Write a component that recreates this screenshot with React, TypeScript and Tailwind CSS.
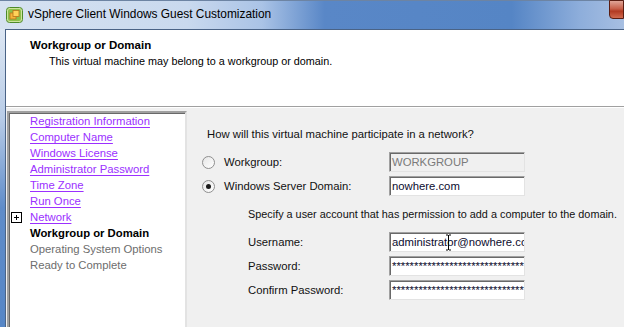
import React from "react";

const ui = { fontFamily: '"Liberation Sans", Arial, sans-serif' };

function Field({ value, disabled, cursor }: { value: string; disabled?: boolean; cursor?: boolean }) {
  return (
    <div
      className={`relative w-[136px] h-[20px] border border-[#a0a0a0] border-b-[#e3e3e3] border-r-[#e3e3e3] shadow-[inset_1px_1px_0_#696969] overflow-hidden whitespace-nowrap pl-[2px] flex items-center text-[11.3px] ${
        disabled ? "bg-[#f0f0f0] text-[#7a7a7a]" : "bg-white text-[#0b0b2e]"
      }`}
    >
      <span>{value}</span>
      {cursor && (
        <svg className="absolute left-[55px] top-[1px]" width="7" height="17" viewBox="0 0 7 17">
          <path d="M1 1h2M4 1h2M3.5 1v15M1 16h2M4 16h2" stroke="#000" strokeWidth="1" fill="none" />
        </svg>
      )}
    </div>
  );
}

function Radio({ checked }: { checked?: boolean }) {
  return (
    <div className="w-[13px] h-[13px] rounded-full border border-[#8f8f8f] bg-gradient-to-br from-[#e6e6e6] to-white flex items-center justify-center">
      {checked && <div className="w-[5px] h-[5px] rounded-full bg-[#1a1a1a]" />}
    </div>
  );
}

export default function App() {
  const links = [
    "Registration Information",
    "Computer Name",
    "Windows License",
    "Administrator Password",
    "Time Zone",
    "Run Once",
  ];
  return (
    <div className="w-[624px] h-[327px] overflow-hidden flex flex-col bg-[#f0f0f0]" style={ui}>
      {/* Title bar */}
      <div className="h-[29px] shrink-0 flex bg-[linear-gradient(90deg,#d6e2f1_0%,#c9d9ee_30%,#aac3e6_42%,#5987c7_52%,#5585c5_82%,#8eaedb_93%,#a7bfe2_100%)] border-t border-[#6d84a3]">
        <div className="flex items-center pl-[6px] gap-[5px]">
          <svg width="17" height="16" viewBox="0 0 17 16">
            <rect x="0.5" y="0.5" width="16" height="15" rx="3" fill="#cde39a" stroke="#4d8a2a" />
            <rect x="2" y="2" width="13" height="12" rx="2" fill="#8cc04a" />
            <rect x="4" y="6" width="6" height="6" fill="#f4b63a" stroke="#b9731a" strokeWidth="0.8" />
            <rect x="7" y="3.5" width="6" height="6" fill="#ffd35a" stroke="#b9731a" strokeWidth="0.8" />
          </svg>
          <span className="text-[11.9px] text-black">vSphere Client Windows Guest Customization</span>
        </div>
        <div className="ml-auto self-start w-[15px] h-[19px] -mt-px rounded-bl-[4px] border border-[#5a1d12] bg-[linear-gradient(180deg,#e0a597_0%,#c7604a_45%,#b23a22_60%,#d06a4e_100%)]" />
      </div>

      <div className="flex flex-1 min-h-0">
        {/* left frame */}
        <div className="w-[5px] shrink-0 bg-[linear-gradient(180deg,#dde7f3_0%,#b8cce7_30%,#5f8cc9_60%,#5686c6_100%)]" />
        <div className="flex-1 flex flex-col border-l border-t border-[#4a6386] min-w-0">
          {/* header */}
          <div className="h-[76px] shrink-0 bg-white pl-[24px] pt-[7px] text-black">
            <div className="h-[16px] leading-[16px] text-[11.5px] font-bold">Workgroup or Domain</div>
            <div className="h-[16px] leading-[16px] text-[10.8px] pl-[19px] whitespace-nowrap">
              This virtual machine may belong to a workgroup or domain.
            </div>
          </div>
          <div className="h-[2px] shrink-0 border-t border-[#a0a0a0] bg-white" />

          {/* body */}
          <div className="flex flex-1 min-h-0 pt-[3px] text-[11.3px] text-[#111] whitespace-nowrap">
            {/* sidebar */}
            <div className="w-[180px] ml-px shrink-0 bg-white border-2 border-b-0 border-[#a0a0a0] border-r-[#e3e3e3] shadow-[inset_1px_1px_0_#696969] pl-[2px]">
              {links.map((l) => (
                <div key={l} className="flex h-[16px] leading-[16px] items-center">
                  <div className="w-[19px]" />
                  <span className="text-[#9b30ff] underline underline-offset-[2px]">{l}</span>
                </div>
              ))}
              <div className="flex h-[16px] leading-[16px] items-center">
                <div className="w-[19px] flex items-center">
                  <svg width="11" height="11" viewBox="0 0 11 11">
                    <rect x="0.5" y="0.5" width="10" height="10" fill="white" stroke="#000" />
                    <path d="M3 5.5h5M5.5 3v5" stroke="#000" />
                  </svg>
                </div>
                <span className="text-[#9b30ff] underline underline-offset-[2px]">Network</span>
              </div>
              <div className="flex h-[16px] leading-[16px] items-center">
                <div className="w-[19px]" />
                <span className="font-bold text-black">Workgroup or Domain</span>
              </div>
              <div className="flex h-[16px] leading-[16px] items-center">
                <div className="w-[19px]" />
                <span className="text-[#6d6d6d]">Operating System Options</span>
              </div>
              <div className="flex h-[16px] leading-[16px] items-center">
                <div className="w-[19px]" />
                <span className="text-[#6d6d6d]">Ready to Complete</span>
              </div>
            </div>

            {/* main */}
            <div className="flex-1 flex flex-col pl-[15px] pt-[15px]">
              <div className="h-[16px] leading-[16px] pl-[5px]">
                How will this virtual machine participate in a network?
              </div>
              <div className="flex flex-col gap-[4px] mt-[10px]">
                <div className="flex items-center h-[20px]">
                  <Radio />
                  <span className="ml-[9px] w-[165px]">Workgroup:</span>
                  <Field value="WORKGROUP" disabled />
                </div>
                <div className="flex items-center h-[20px]">
                  <Radio checked />
                  <span className="ml-[9px] w-[165px]">Windows Server Domain:</span>
                  <Field value="nowhere.com" />
                </div>
              </div>
              <div className="pl-[46px] mt-[10px]">
                <div className="h-[16px] leading-[16px] text-[10.85px]">
                  Specify a user account that has permission to add a computer to the domain.
                </div>
                <div className="flex flex-col gap-[4px] mt-[10px]">
                  <div className="flex items-center h-[20px]">
                    <span className="w-[141px]">Username:</span>
                    <Field value="administrator@nowhere.com" cursor />
                  </div>
                  <div className="flex items-center h-[20px]">
                    <span className="w-[141px]">Password:</span>
                    <Field value="******************************" />
                  </div>
                  <div className="flex items-center h-[20px]">
                    <span className="w-[141px]">Confirm Password:</span>
                    <Field value="******************************" />
                  </div>
                </div>
              </div>
            </div>
          </div>
        </div>
      </div>
    </div>
  );
}
